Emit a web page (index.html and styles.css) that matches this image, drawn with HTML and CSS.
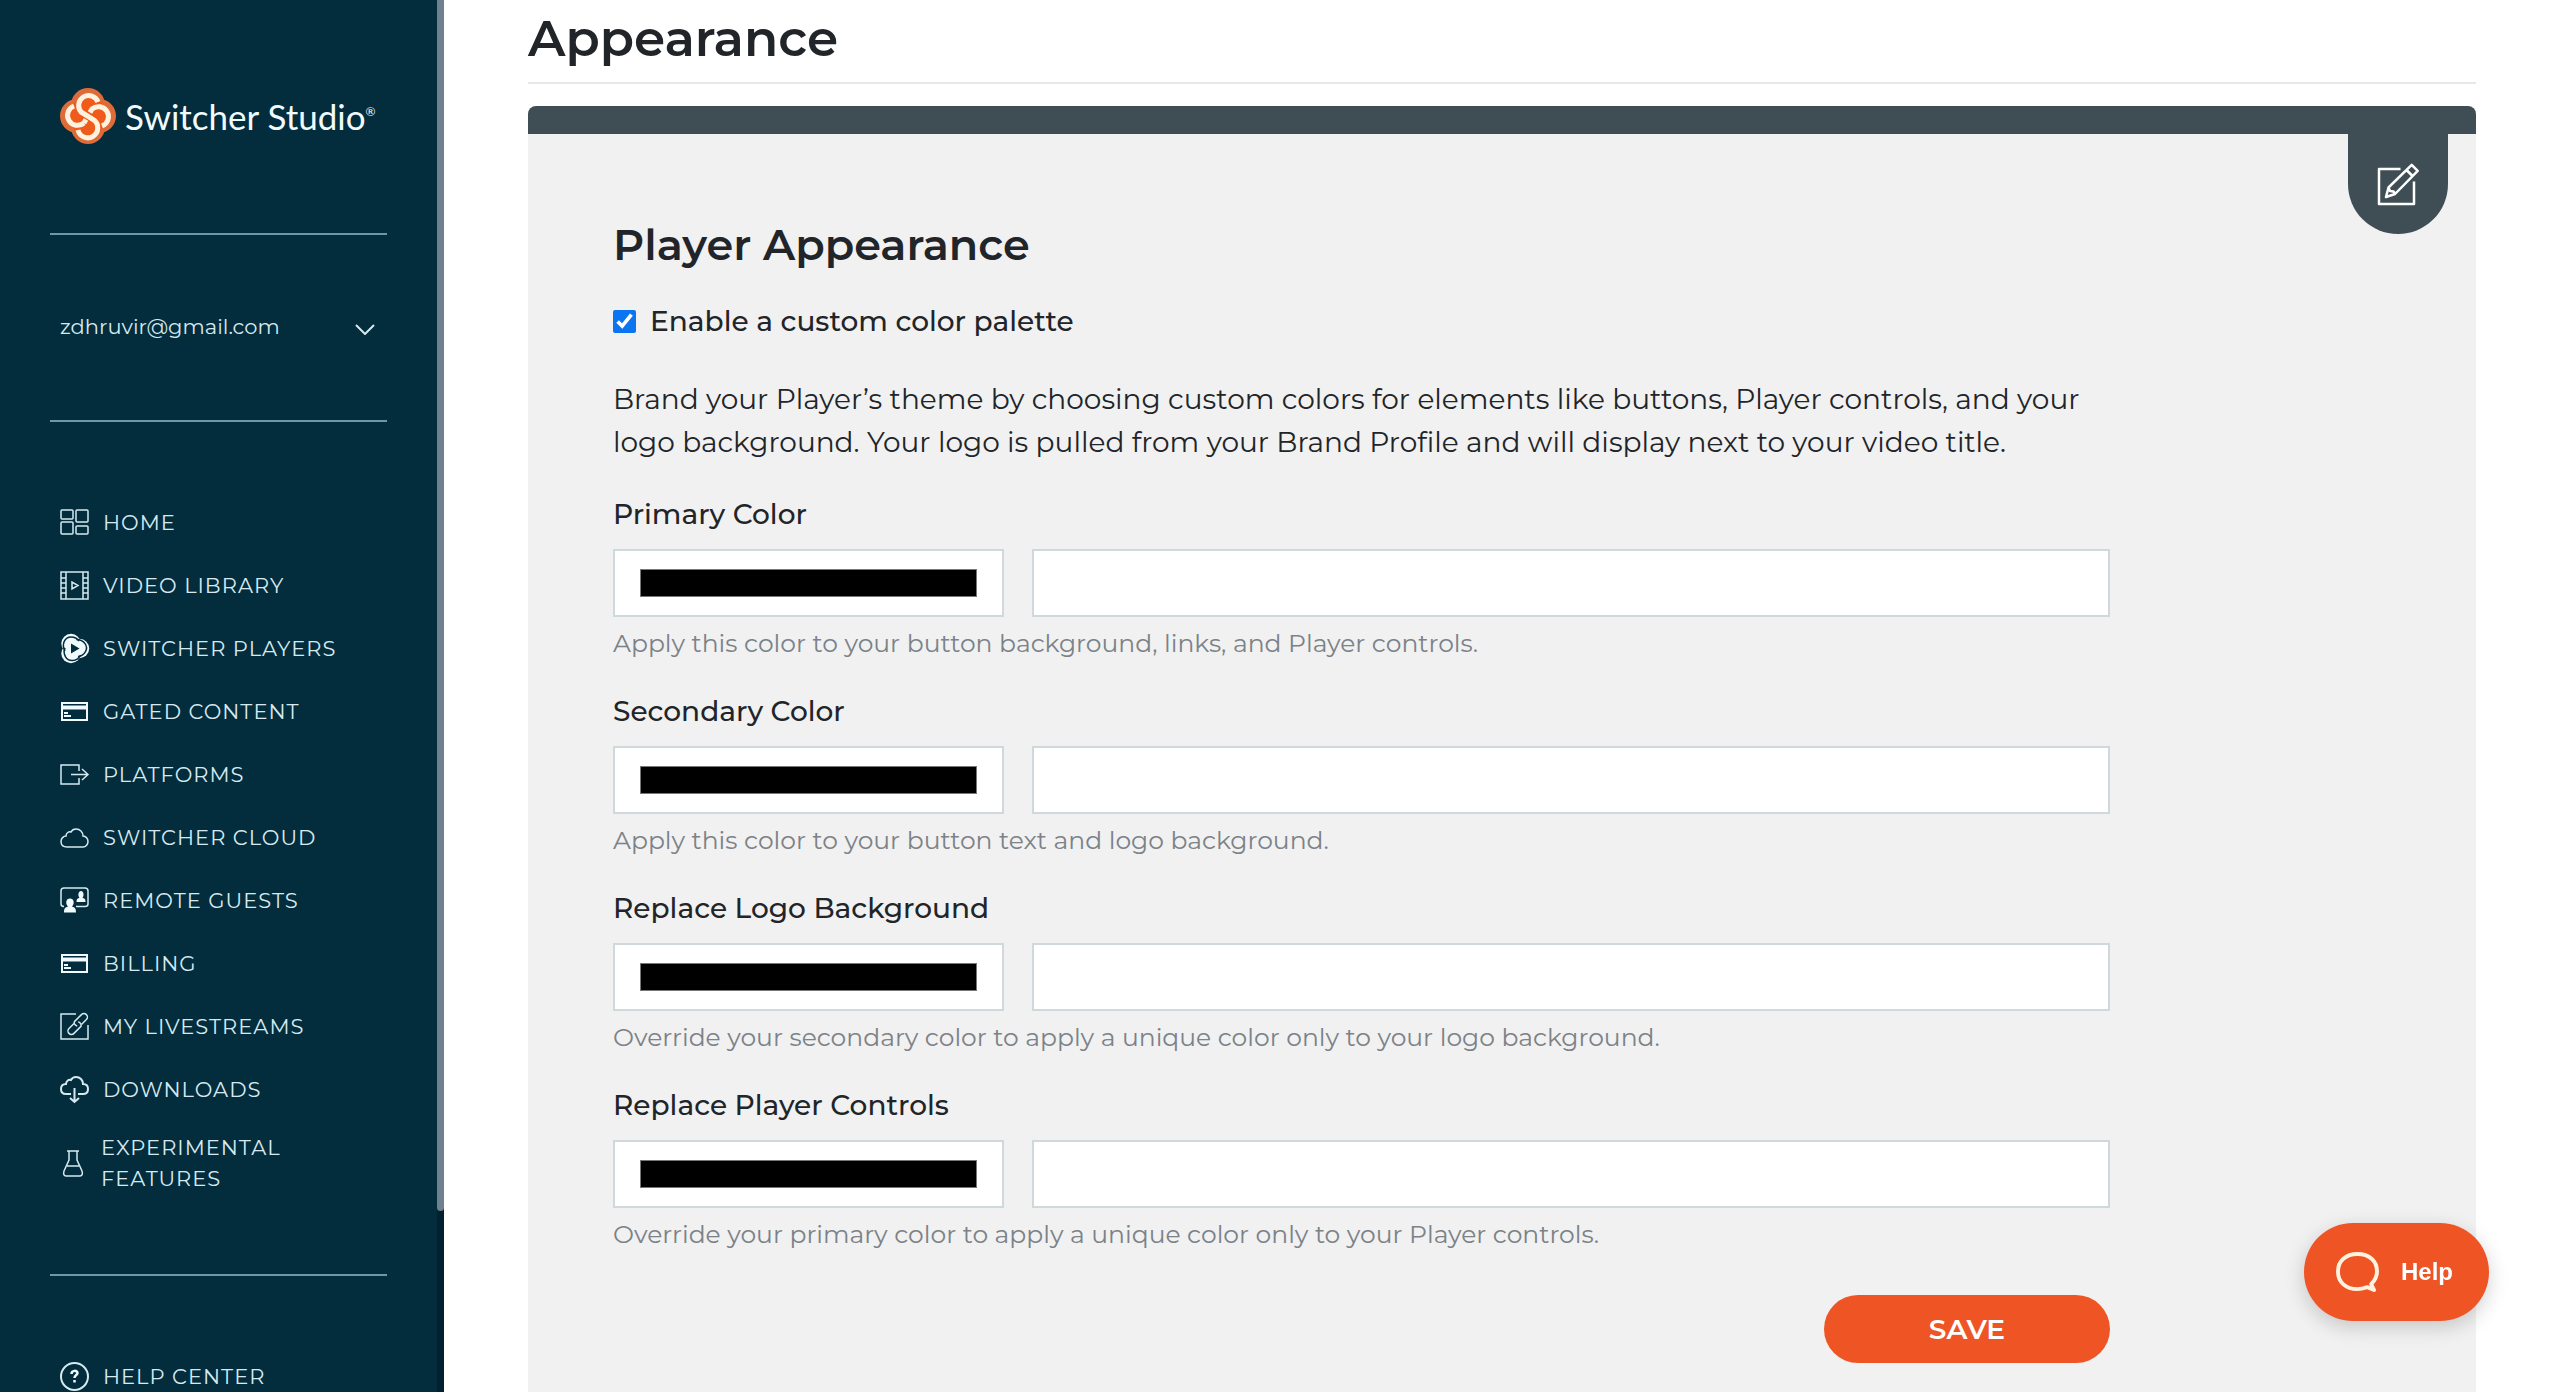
FILE: index.html
```
<!DOCTYPE html>
<html lang="en">
<head>
<meta charset="utf-8">
<title>Appearance - Switcher Studio</title>
<meta name="viewport" content="width=device-width, initial-scale=1">
<link rel="stylesheet" href="styles.css">
</head>
<body>
<div class="app">
  <aside class="sidebar">
    <div class="sidebar-body">
      <a class="brand" href="#">
        <svg class="brand-mark" viewBox="0 0 56 56" aria-hidden="true">
          <g fill="#de6b38"><circle cx="28" cy="17" r="17"/><circle cx="28" cy="39" r="17"/><circle cx="17" cy="28" r="17"/><circle cx="39" cy="28" r="17"/></g>
          <circle cx="28" cy="28" r="19" fill="#f05a1a"/>
          <g fill="none" stroke="#fff3e0" stroke-width="5">
            <path d="M14 18A10 10 0 1 0 24 35M42 38A10 10 0 1 0 32 21L24 35"/>
            <path stroke="#f05a1a" stroke-width="8" d="M22 24.500L34 31.500"/>
            <path d="M38 14A10 10 0 1 0 21 24L34 32A10 10 0 1 1 18 42"/>
          </g>
        </svg>
        <span class="brand-name">Switcher Studio<sup>®</sup></span>
      </a>
      <button class="account" type="button">
        <span>zdhruvir@gmail.com</span>
        <svg class="chevron" viewBox="0 0 20 11" aria-hidden="true"><path d="M1 1l9 9 9-9"/></svg>
      </button>
      <nav class="menu">
        <a href="#"><svg viewBox="0 0 29 29"><rect x="1" y="2" width="12" height="9" rx="1"/><rect x="16" y="2" width="12" height="12" rx="1"/><rect x="1" y="14" width="12" height="12" rx="1"/><rect x="16" y="18" width="12" height="8" rx="1"/></svg>HOME</a>
        <a href="#"><svg viewBox="0 0 29 29"><path d="M1 1h27v27H1zM6 1v27M23 1v27M1 7h5M1 12h5M1 17h5M1 22h5M23 7h5M23 12h5M23 17h5M23 22h5M12 11v7l6-3.500z"/></svg>VIDEO LIBRARY</a>
        <a href="#"><svg viewBox="0 0 29 29"><circle cx="11" cy="9.500" r="9.700" class="solid"/><circle cx="19.500" cy="14.500" r="9.700" class="solid"/><circle cx="11" cy="19.500" r="9.700" class="solid"/><g class="cut"><path d="M5 17C1 10 5 3 11 3c4 0 6 1 8 4"/><path d="M5 17C1 10 5 3 11 3c4 0 6 1 8 4" transform="rotate(120 14 14.500)"/><path d="M5 17C1 10 5 3 11 3c4 0 6 1 8 4" transform="rotate(240 14 14.500)"/></g><path class="hole" d="M11 9.500v10l8.500-5z"/></svg>SWITCHER PLAYERS</a>
        <a href="#"><svg class="card-icon" viewBox="0 0 29 29"><path d="M2 6h25v17H2z"/><path class="band" d="M2 10.500h25"/><path d="M4 16h4M4 19h7"/></svg>GATED CONTENT</a>
        <a href="#"><svg viewBox="0 0 29 29"><path d="M19 11V5H1v19h18v-6M11 14.500h17M22 9l6 5.500-6 5.500"/></svg>PLATFORMS</a>
        <a href="#"><svg viewBox="0 0 29 29"><path d="M7 24C3 24 1 21.500 1 18.500S3.500 13 6 13c0-3 3-5 5-4 1-2 3-3 5-3 4 0 7 3 7 7 3 0 5 3 5 5.500S26 24 23 24z"/></svg>SWITCHER CLOUD</a>
        <a href="#"><svg viewBox="0 0 29 29"><path d="M4 20.500C2 20.500 1 19.500 1 18V5c0-2 1-3 3-3h21c2 0 3 1 3 3v13c0 1.500-1 2.500-3 2.500h-9"/><path class="solid" d="M16.500 16c0-3 1-4 3-4-2-3-1-7 1.500-7s3.500 4 1.500 7c2 0 3 1 3 4zM4 26.500c0-4 1-5 4-6-3-3-2-8 2-8s5 5 2 8c3 1 4 2 4 6z"/></svg>REMOTE GUESTS</a>
        <a href="#"><svg class="card-icon" viewBox="0 0 29 29"><path d="M2 6h25v17H2z"/><path class="band" d="M2 10.500h25"/><path d="M4 16h4M4 19h7"/></svg>BILLING</a>
        <a href="#"><svg viewBox="0 0 29 29"><path d="M16 2H1v25h27V13"/><g transform="rotate(-45 17.700 12)"><path d="M16 13a3.300 3.300 0 0 1 1-5H27a3.300 3.300 0 0 1 0 7h-7"/><path d="M19.400 11a3.300 3.300 0 0 1-1 5H8.400a3.300 3.300 0 0 1 0-7h7"/></g></svg>MY LIVESTREAMS</a>
        <a href="#"><svg viewBox="0 0 29 29"><path class="medium" d="M11 19H6c-3 0-5-2-5-5s2-5 5-5c0-3 3-5 5-4 1-2 3-3 5-3 4 0 7 3 7 7 3 0 5 2 5 5s-2 5-5 5h-5M14.500 13v14M10 23l4.500 4 4.500-4"/></svg>DOWNLOADS</a>
        <a href="#" class="two-line"><svg viewBox="0 0 29 29"><path d="M7 2h12M9 2v9L4 22c-1 3 0 5 2 5h14c2 0 3-2 2-5l-5-11V2M7 17h12"/></svg>EXPERIMENTAL FEATURES</a>
      </nav>
      <nav class="menu support">
        <a href="#"><svg viewBox="0 0 29 29"><circle class="medium" cx="14.500" cy="14.500" r="13.500"/><path class="bold" d="M11.500 12c0-4 6-4 6-1 0 2-3 2-3 5M14.500 18v2.500"/></svg>HELP CENTER</a>
      </nav>
    </div>
    <div class="sidebar-track"><div class="sidebar-thumb"></div></div>
  </aside>
  <main class="content">
    <h1>Appearance</h1>
    <section class="card">
      <button class="edit-tab" type="button" aria-label="Edit">
        <svg viewBox="0 0 40 40" aria-hidden="true"><path d="M22.500 5H1v35h35V17.500M8 33l2.500-9.500L33.700 .8l6 6L17 30zM28.500 6l6 6M10.500 23.500l1.500 3.500 3.500 .5 1.500 2.500"/></svg>
      </button>
      <form class="settings">
        <h2>Player Appearance</h2>
        <label class="toggle"><input type="checkbox" checked>Enable a custom color palette</label>
        <p class="intro">Brand your Player’s theme by choosing custom colors for elements like buttons, Player controls, and your logo background. Your logo is pulled from your Brand Profile and will display next to your video title.</p>
        <div class="field">
          <label for="primary">Primary Color</label>
          <div class="row"><input id="primary" type="color" value="#000000"><input type="text" aria-label="Primary color value"></div>
          <p class="hint">Apply this color to your button background, links, and Player controls.</p>
        </div>
        <div class="field">
          <label for="secondary">Secondary Color</label>
          <div class="row"><input id="secondary" type="color" value="#000000"><input type="text" aria-label="Secondary color value"></div>
          <p class="hint">Apply this color to your button text and logo background.</p>
        </div>
        <div class="field">
          <label for="logo-bg">Replace Logo Background</label>
          <div class="row"><input id="logo-bg" type="color" value="#000000"><input type="text" aria-label="Logo background value"></div>
          <p class="hint">Override your secondary color to apply a unique color only to your logo background.</p>
        </div>
        <div class="field">
          <label for="controls">Replace Player Controls</label>
          <div class="row"><input id="controls" type="color" value="#000000"><input type="text" aria-label="Player controls value"></div>
          <p class="hint">Override your primary color to apply a unique color only to your Player controls.</p>
        </div>
        <button class="save" type="submit">SAVE</button>
      </form>
    </section>
  </main>
</div>
<button class="help" type="button">
  <svg viewBox="0 0 44 42" aria-hidden="true"><path d="M36 33c4-4 6-8 6-13C42 9 34 2 22 2S2 9 2 20s8 18 20 18c4 0 7-1 10-2l7 3z"/></svg>
  Help
</button>
</body>
</html>
```
FILE: styles.css
```
* { box-sizing: border-box; }

body {
  margin: 0;
  background: #fff;
  color: #212529;
  font-family: Montserrat, Inter, sans-serif;
  font-size: 28px;
}

h1, h2, p { margin: 0; }
button, input { font: inherit; }
button { border: 0; cursor: pointer; }

.app {
  display: flex;
  height: 100vh;
  overflow: hidden;
}

/* Sidebar */
.sidebar {
  flex: 0 0 444px;
  display: flex;
  background: #032c3d;
  color: #d5eaf0;
  overflow: hidden;
}
.sidebar-body { flex: 1; padding: 0 50px; }
.sidebar-track { width: 7px; background: #02202f; }
.sidebar-thumb { height: 87%; border-radius: 0 0 4px 4px; background: #718090; }

.brand {
  display: flex;
  align-items: center;
  gap: 9px;
  height: 235px;
  padding: 0 0 2px 10px;
  border-bottom: 2px solid #6f97a4;
  color: #f1fbfd;
  text-decoration: none;
}
.brand-mark { width: 56px; height: 56px; flex: none; }
.brand-name { font: 400 35px/40px Lato, sans-serif; white-space: nowrap; }
.brand-name sup { font-size: 12px; line-height: 0; vertical-align: 14px; }

.account {
  display: flex;
  align-items: center;
  justify-content: space-between;
  width: 100%;
  height: 187px;
  padding: 0 12px 2px 10px;
  border-bottom: 2px solid #6f97a4;
  background: none;
  color: inherit;
  font-size: 21px;
}
.chevron { width: 20px; height: 11px; margin-top: 6px; fill: none; stroke: currentColor; stroke-width: 2; }

.menu { padding: 69px 10px; border-bottom: 2px solid #6f97a4; }
.menu a {
  display: flex;
  align-items: center;
  gap: 14px;
  min-height: 63px;
  color: inherit;
  font-size: 21px;
  line-height: 31px;
  letter-spacing: 1px;
  text-decoration: none;
}
.menu svg {
  flex: none;
  width: 29px;
  height: 29px;
  overflow: visible;
  fill: none;
  stroke: currentColor;
  stroke-width: 1.5;
}
.menu .medium { stroke-width: 2; }
.menu .bold { stroke-width: 2.5; stroke: #f1fbfd; }
.menu .solid { fill: #f1fbfd; stroke: none; }
.menu .card-icon { stroke: #f1fbfd; stroke-width: 2; }
.menu .band { stroke-width: 4; }
.menu .cut { stroke: #032c3d; stroke-width: 1.5; }
.menu .hole { fill: #032c3d; stroke: none; }
.menu .two-line { min-height: 84px; gap: 12px; }
.support { border: 0; }

/* Main column */
.content { flex: 1; padding: 0 84px; }
h1 {
  height: 84px;
  padding-top: 9px;
  border-bottom: 2px solid #e6e8e8;
  font-size: 50px;
  line-height: 60px;
  font-weight: 600;
}
.card {
  position: relative;
  min-height: 100%;
  margin-top: 22px;
  border-top: 28px solid #3f4e55;
  border-radius: 8px 8px 0 0;
  background: #f1f1f1;
}
.edit-tab {
  position: absolute;
  top: 0;
  right: 28px;
  display: grid;
  place-items: center;
  width: 100px;
  height: 100px;
  padding: 0;
  border-radius: 0 0 50px 50px;
  background: #3f4e55;
}
.edit-tab svg { width: 40px; height: 40px; overflow: visible; fill: none; stroke: #fff; stroke-width: 2.5; stroke-linejoin: round; }

.settings { margin-right: 366px; padding: 84px 0 0 85px; }
h2 { font-size: 43px; line-height: 54px; font-weight: 600; }
.toggle { display: flex; align-items: center; gap: 14px; margin-top: 28px; line-height: 42px; font-weight: 500; }
.toggle input { width: 23px; height: 23px; margin: 0; accent-color: #0b74f0; }
.intro { margin: 36px 0 29px; line-height: 43px; }

.field { height: 197px; }
.field > label { display: block; line-height: 42px; font-weight: 500; }
.row { display: flex; gap: 28px; margin-top: 14px; }
.row input { height: 68px; border: 2px solid #cfd8da; border-radius: 0; background: #fff; }
.row input[type="color"] { flex: 0 0 391px; padding: 18px 25px; }
.row input[type="color"]::-webkit-color-swatch-wrapper { padding: 0; }
.row input[type="color"]::-webkit-color-swatch { border: 1px solid #777; border-radius: 0; }
.row input[type="text"] { flex: 1; min-width: 0; padding: 0 20px; }
.hint { margin-top: 8px; color: #7b8288; font-size: 25px; line-height: 36px; }
.save {
  display: block;
  width: 286px;
  height: 68px;
  margin: 14px 0 0 auto;
  border-radius: 34px;
  background: #ef5424;
  color: #fff;
  font-weight: 600;
}

.help {
  position: fixed;
  right: 71px;
  bottom: 71px;
  display: flex;
  align-items: center;
  gap: 22px;
  height: 98px;
  padding: 0 36px 0 32px;
  border-radius: 49px;
  background: #ef5424;
  box-shadow: 0 6px 20px rgba(0, 0, 0, 0.18);
  color: #fff;
  font: 700 24px "Liberation Sans", sans-serif;
}
.help svg { width: 43px; height: 41px; fill: none; stroke: #fff3e0; stroke-width: 4; stroke-linejoin: round; }
```
